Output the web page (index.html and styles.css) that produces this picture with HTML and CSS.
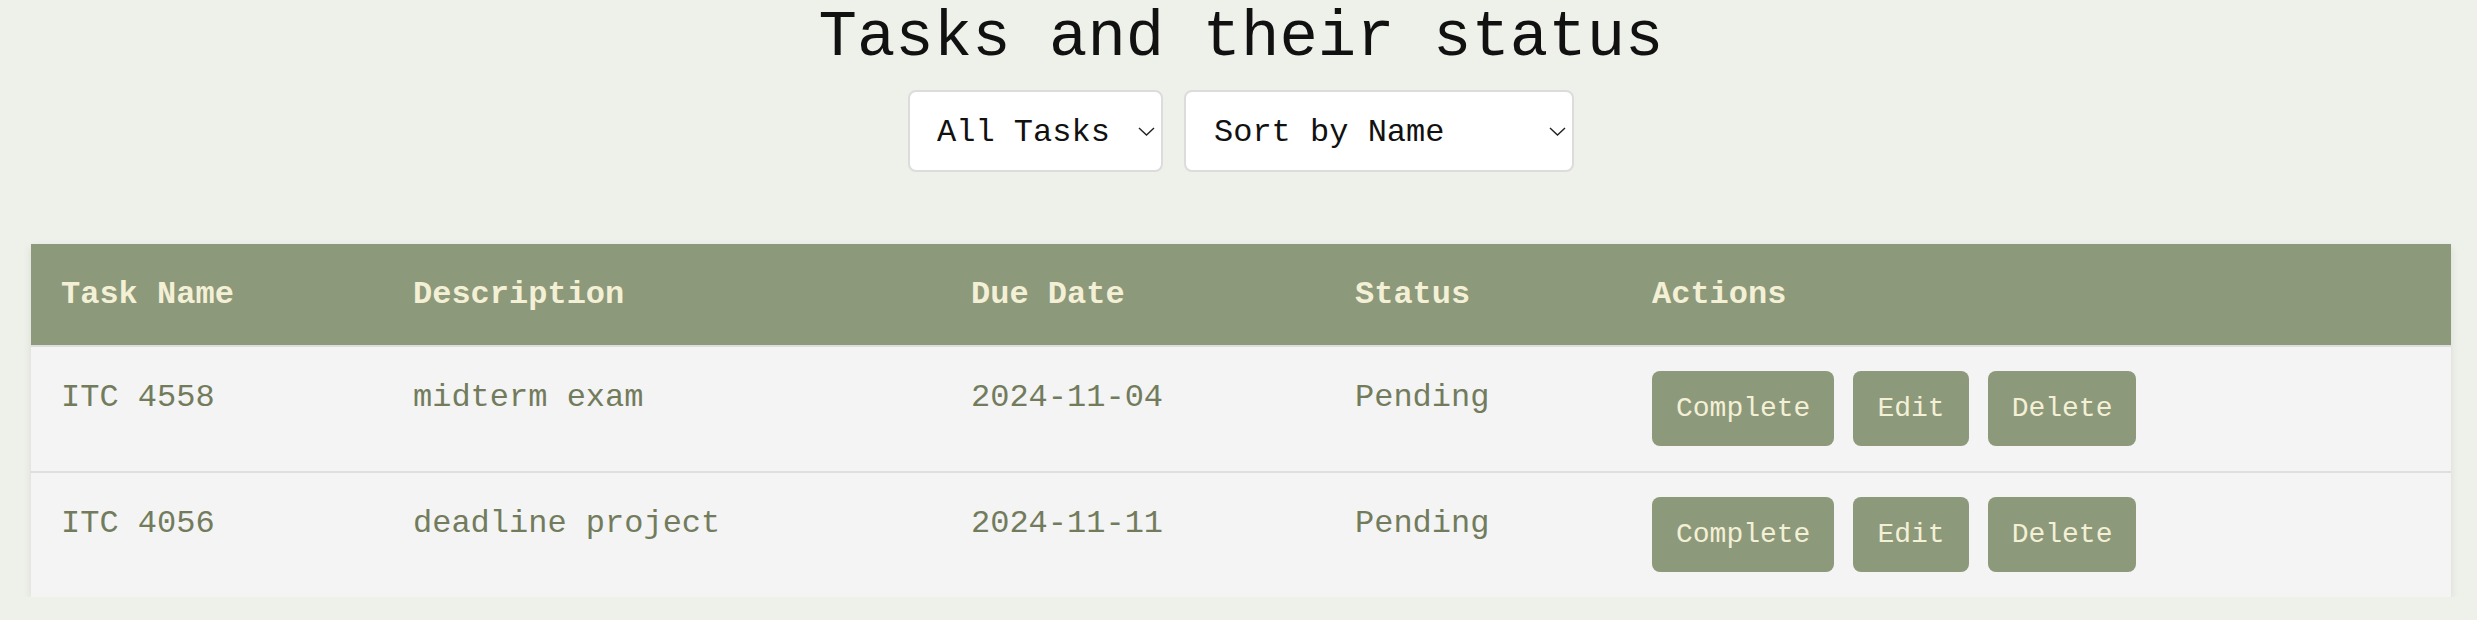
FILE: index.html
```html
<!DOCTYPE html>
<html lang="en">
<head>
<meta charset="utf-8">
<title>Tasks and their status</title>
<link rel="stylesheet" href="styles.css">
</head>
<body>
  <h1 class="title">Tasks and their status</h1>
  <div class="filters">
    <div class="select-wrap select-filter">
      <select class="select">
        <option>All Tasks</option>
        <option>Pending</option>
        <option>Completed</option>
      </select>
      <svg class="chevron" width="17" height="9" viewBox="0 0 17 9"><polyline points="1,1 8.5,8 16,1" fill="none" stroke="#222" stroke-width="1.4"/></svg>
    </div>
    <div class="select-wrap select-sort">
      <select class="select">
        <option>Sort by Name</option>
        <option>Sort by Due Date</option>
      </select>
      <svg class="chevron" width="17" height="9" viewBox="0 0 17 9"><polyline points="1,1 8.5,8 16,1" fill="none" stroke="#222" stroke-width="1.4"/></svg>
    </div>
  </div>
  <table class="tasks">
    <colgroup>
      <col class="c-name">
      <col class="c-desc">
      <col class="c-date">
      <col class="c-status">
      <col class="c-actions">
    </colgroup>
    <thead>
      <tr>
        <th>Task Name</th>
        <th>Description</th>
        <th>Due Date</th>
        <th>Status</th>
        <th>Actions</th>
      </tr>
    </thead>
    <tbody>
      <tr>
        <td>ITC 4558</td>
        <td>midterm exam</td>
        <td>2024-11-04</td>
        <td>Pending</td>
        <td class="actions"><div class="btns"><button class="btn">Complete</button><button class="btn">Edit</button><button class="btn">Delete</button></div></td>
      </tr>
      <tr>
        <td>ITC 4056</td>
        <td>deadline project</td>
        <td>2024-11-11</td>
        <td>Pending</td>
        <td class="actions"><div class="btns"><button class="btn">Complete</button><button class="btn">Edit</button><button class="btn">Delete</button></div></td>
      </tr>
    </tbody>
  </table>
</body>
</html>
```
FILE: styles.css
```css
html, body {
  margin: 0;
  padding: 0;
}
body {
  background: #eef0ea;
  font-family: "Liberation Mono", "Courier New", monospace;
  padding-left: 5px;
  color: #000;
}
.title {
  margin: 0;
  padding-top: 2px;
  font-size: 64px;
  font-weight: normal;
  text-align: center;
  line-height: normal;
  color: #111;
}
.filters {
  display: flex;
  justify-content: center;
  gap: 21px;
  margin-top: 16px;
}
.select-wrap {
  position: relative;
  height: 82px;
}
.select-filter { width: 255px; }
.select-sort { width: 390px; }
.select {
  appearance: none;
  -webkit-appearance: none;
  box-sizing: border-box;
  width: 100%;
  height: 82px;
  padding: 3px 40px 0 27px;
  border: 2px solid #dcdcdc;
  border-radius: 8px;
  background: #fff;
  font-family: "Liberation Mono", "Courier New", monospace;
  font-size: 32px;
  color: #111;
  line-height: normal;
}
.select-sort .select { padding-left: 28px; }
.chevron {
  position: absolute;
  right: 8px;
  top: 37px;
  pointer-events: none;
}
.tasks {
  width: 2420px;
  margin: 72px auto 0;
  border-collapse: collapse;
  table-layout: fixed;
  box-shadow: 0 3px 8px rgba(0, 0, 0, 0.09);
  background: #f4f4f4;
}
.c-name { width: 352px; }
.c-desc { width: 558px; }
.c-date { width: 384px; }
.c-status { width: 297px; }
.c-actions { width: 829px; }
.tasks th {
  background: #8c997b;
  color: #f4f0d6;
  font-size: 32px;
  font-weight: bold;
  text-align: left;
  padding: 32px 30px;
  line-height: normal;
  border-bottom: 2px solid #dedede;
}
.tasks td {
  font-size: 32px;
  color: #727c5d;
  text-align: left;
  vertical-align: top;
  padding: 32px 30px 0;
  line-height: normal;
}
.tasks tbody tr:not(:last-child) td {
  border-bottom: 2px solid #dedede;
}
.tasks td.actions {
  padding: 24px 30px 25px;
  vertical-align: middle;
}
.btns {
  display: flex;
  gap: 19px;
}
.btn {
  font-family: "Liberation Mono", "Courier New", monospace;
  font-size: 28px;
  line-height: normal;
  color: #f4f0d6;
  background: #8c997b;
  border: none;
  border-radius: 8px;
  padding: 22px 24px;
  margin: 0;
}
```
